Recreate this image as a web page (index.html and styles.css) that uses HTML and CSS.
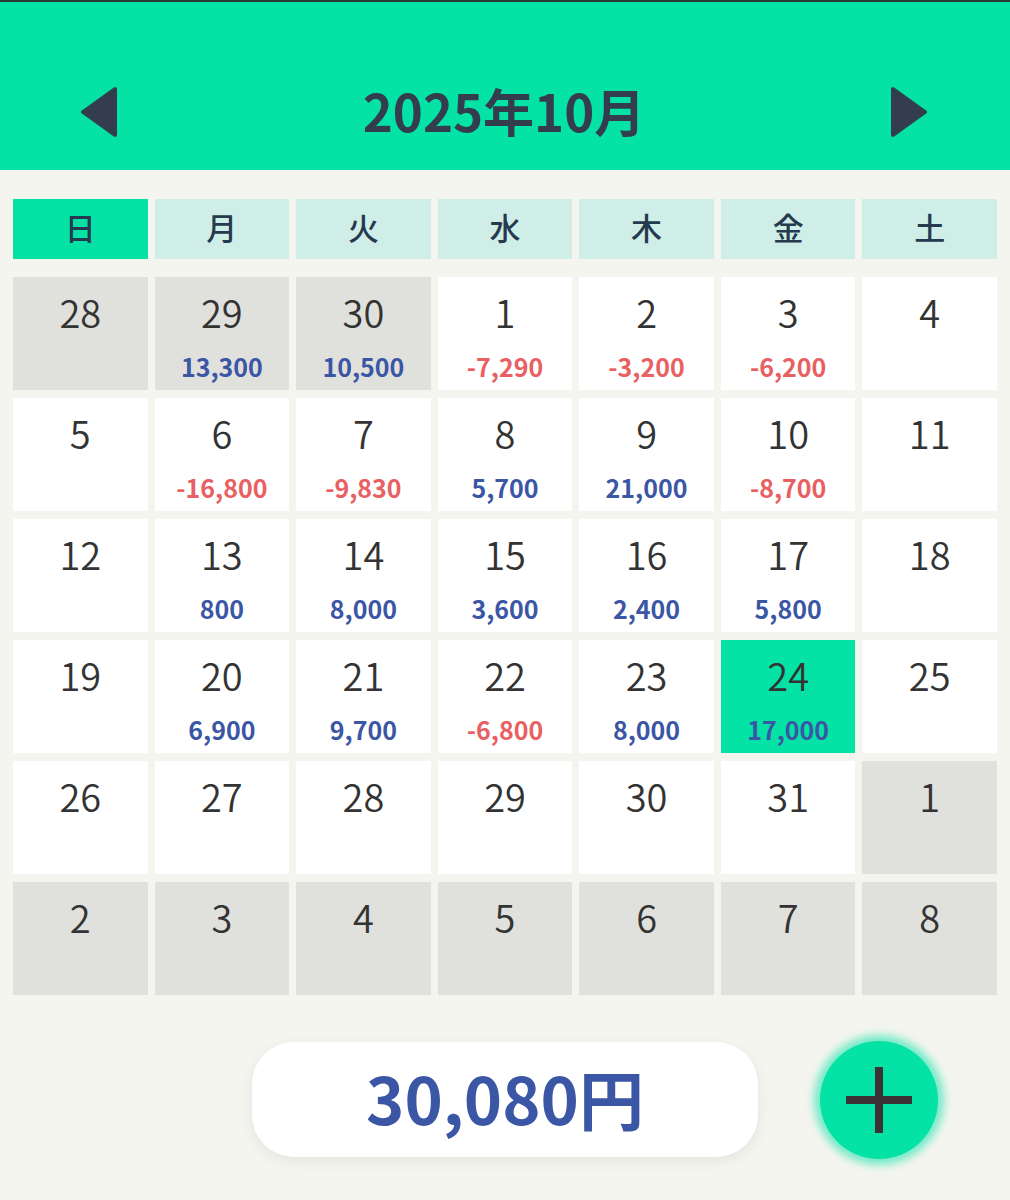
FILE: index.html
```html
<!DOCTYPE html>
<html lang="ja">
<head>
<meta charset="utf-8">
<title>2025年10月</title>
<link rel="stylesheet" href="styles.css">
</head>
<body>
<header class="header">
  <button class="nav nav-prev" aria-label="前の月">
    <svg width="38" height="52" viewBox="0 0 38 52"><polygon points="35,3 35,49 3,26" fill="#333D4E" stroke="#333D4E" stroke-width="4" stroke-linejoin="round"/></svg>
  </button>
  <h1 class="title">2025年10月</h1>
  <button class="nav nav-next" aria-label="次の月">
    <svg width="38" height="52" viewBox="0 0 38 52"><polygon points="3,3 3,49 35,26" fill="#333D4E" stroke="#333D4E" stroke-width="4" stroke-linejoin="round"/></svg>
  </button>
</header>

<main class="calendar">
  <div class="weekdays">
    <div class="wd wd-sun">日</div>
    <div class="wd">月</div>
    <div class="wd">火</div>
    <div class="wd">水</div>
    <div class="wd">木</div>
    <div class="wd">金</div>
    <div class="wd">土</div>
  </div>

  <div class="days">
    <div class="day other"><span class="num">28</span></div>
    <div class="day other"><span class="num">29</span><span class="amt plus">13,300</span></div>
    <div class="day other"><span class="num">30</span><span class="amt plus">10,500</span></div>
    <div class="day"><span class="num">1</span><span class="amt minus">-7,290</span></div>
    <div class="day"><span class="num">2</span><span class="amt minus">-3,200</span></div>
    <div class="day"><span class="num">3</span><span class="amt minus">-6,200</span></div>
    <div class="day"><span class="num">4</span></div>

    <div class="day"><span class="num">5</span></div>
    <div class="day"><span class="num">6</span><span class="amt minus">-16,800</span></div>
    <div class="day"><span class="num">7</span><span class="amt minus">-9,830</span></div>
    <div class="day"><span class="num">8</span><span class="amt plus">5,700</span></div>
    <div class="day"><span class="num">9</span><span class="amt plus">21,000</span></div>
    <div class="day"><span class="num">10</span><span class="amt minus">-8,700</span></div>
    <div class="day"><span class="num">11</span></div>

    <div class="day"><span class="num">12</span></div>
    <div class="day"><span class="num">13</span><span class="amt plus">800</span></div>
    <div class="day"><span class="num">14</span><span class="amt plus">8,000</span></div>
    <div class="day"><span class="num">15</span><span class="amt plus">3,600</span></div>
    <div class="day"><span class="num">16</span><span class="amt plus">2,400</span></div>
    <div class="day"><span class="num">17</span><span class="amt plus">5,800</span></div>
    <div class="day"><span class="num">18</span></div>

    <div class="day"><span class="num">19</span></div>
    <div class="day"><span class="num">20</span><span class="amt plus">6,900</span></div>
    <div class="day"><span class="num">21</span><span class="amt plus">9,700</span></div>
    <div class="day"><span class="num">22</span><span class="amt minus">-6,800</span></div>
    <div class="day"><span class="num">23</span><span class="amt plus">8,000</span></div>
    <div class="day today"><span class="num">24</span><span class="amt plus">17,000</span></div>
    <div class="day"><span class="num">25</span></div>

    <div class="day"><span class="num">26</span></div>
    <div class="day"><span class="num">27</span></div>
    <div class="day"><span class="num">28</span></div>
    <div class="day"><span class="num">29</span></div>
    <div class="day"><span class="num">30</span></div>
    <div class="day"><span class="num">31</span></div>
    <div class="day other"><span class="num">1</span></div>

    <div class="day other"><span class="num">2</span></div>
    <div class="day other"><span class="num">3</span></div>
    <div class="day other"><span class="num">4</span></div>
    <div class="day other"><span class="num">5</span></div>
    <div class="day other"><span class="num">6</span></div>
    <div class="day other"><span class="num">7</span></div>
    <div class="day other"><span class="num">8</span></div>
  </div>
</main>

<footer class="footer">
  <div class="total">30,080円</div>
  <button class="fab" aria-label="追加">
    <svg width="70" height="70" viewBox="0 0 70 70"><rect x="2" y="31" width="66" height="8" fill="#3A3234"/><rect x="31" y="2" width="8" height="66" fill="#3A3234"/></svg>
  </button>
</footer>
</body>
</html>
```

FILE: styles.css
```css
* { box-sizing: border-box; }

html, body {
  margin: 0;
  padding: 0;
}

body {
  background: #F5F5F0;
  font-family: "Noto Sans CJK JP", "Noto Sans", sans-serif;
  color: #333;
  width: 1010px;
  height: 1200px;
  overflow: hidden;
}

.header {
  height: 170px;
  background: #05E2A6;
  border-top: 2px solid #2A3A36;
  display: flex;
  align-items: center;
  justify-content: space-between;
  padding: 48px 82px 0 80px;
}

.nav {
  background: none;
  border: 0;
  padding: 0;
  width: 38px;
  height: 52px;
  display: flex;
  margin-top: 4px;
}

.title {
  margin: 0;
  font-size: 51px;
  font-weight: 700;
  color: #333D4E;
  line-height: 1;
}

.calendar {
  padding: 29px 13px 0;
}

.weekdays {
  display: grid;
  grid-template-columns: repeat(7, 1fr);
  column-gap: 7px;
  margin-bottom: 18px;
}

.wd {
  height: 60px;
  background: #CFEEE8;
  display: flex;
  align-items: center;
  justify-content: center;
  font-size: 31px;
  font-weight: 500;
  color: #253A4E;
  line-height: 1;
  padding-bottom: 5px;
}

.wd-sun { background: #05E2A6; }

.days {
  display: grid;
  grid-template-columns: repeat(7, 1fr);
  grid-auto-rows: 113px;
  gap: 8px 7px;
}

.day {
  background: #FFFFFF;
  display: flex;
  flex-direction: column;
  align-items: center;
  padding-top: 12px;
}

.day.other { background: #E0E0DC; }
.day.today { background: #05E2A6; }

.num {
  font-size: 38px;
  line-height: 46px;
  font-weight: 350;
  color: #333;
}

.amt {
  margin-top: 16px;
  font-size: 25px;
  line-height: 30px;
  font-weight: 700;
}

.amt.plus { color: #3A56A5; }
.amt.minus { color: #E86062; }

.footer {
  position: relative;
  display: flex;
  justify-content: center;
  padding-top: 47px;
}

.total {
  width: 506px;
  height: 115px;
  background: #FFFFFF;
  border-radius: 42px;
  box-shadow: 0 4px 14px rgba(0, 0, 0, 0.07);
  display: flex;
  align-items: center;
  justify-content: center;
  font-size: 65px;
  font-weight: 700;
  color: #3A56A5;
  line-height: 1;
  padding-bottom: 4px;
}

.fab {
  position: absolute;
  left: 820px;
  top: 46px;
  width: 118px;
  height: 118px;
  border-radius: 50%;
  border: 0;
  padding: 0;
  background: #05E2A6;
  box-shadow: 0 0 8px 6px rgba(5, 226, 166, 0.55);
  display: flex;
  align-items: center;
  justify-content: center;
}
```
